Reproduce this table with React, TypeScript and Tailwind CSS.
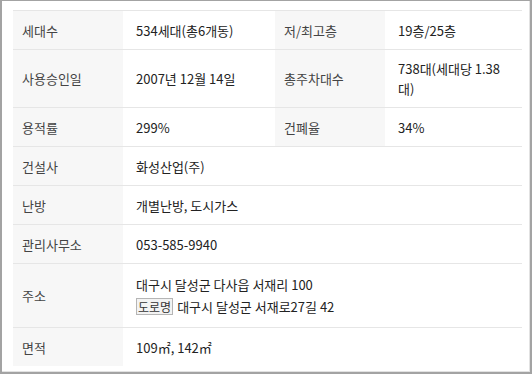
import React from "react"

const font = { fontFamily: '"Noto Sans CJK KR", "Noto Sans", sans-serif' }

type Cell = { label: string; value: React.ReactNode }

const Th = ({ children }: { children: React.ReactNode }) => (
	<div className="flex items-center bg-[#f7f7f7] pl-[9px] text-[13px] text-[#444]">{children}</div>
)

const Td = ({ children, span }: { children: React.ReactNode; span?: boolean }) => (
	<div
		className={
			span
				? "col-span-3 flex items-center pl-[13px] pr-3 text-[13px] text-[#222]"
				: "flex items-center pl-[13px] pr-3 text-[13px] text-[#222]"
		}>
		{children}
	</div>
)

const Row = ({ h, cells }: { h: string; cells: Cell[] }) => (
	<div className={`grid grid-cols-[110px_152px_110px_137px] border-t border-[#e6e6e6] ${h}`}>
		{cells.map((c, i) => (
			<React.Fragment key={i}>
				<Th>{c.label}</Th>
				<Td span={cells.length === 1}>{c.value}</Td>
			</React.Fragment>
		))}
	</div>
)

export default function App() {
	return (
		<div style={font} className="h-[374px] w-[532px] bg-white">
			<div className="h-full w-full border-l-2 border-t border-r-2 border-b-2 border-[#a3a3a3]">
				<div className="h-full w-full border-r border-b border-[#e2e2e2] pl-[11px] pt-[9px]">
					<div className="w-[509px] leading-[19px]">
						<Row
							h="h-[39px]"
							cells={[
								{ label: "세대수", value: "534세대(총6개동)" },
								{ label: "저/최고층", value: "19층/25층" },
							]}
						/>
						<Row
							h="h-[58px]"
							cells={[
								{ label: "사용승인일", value: "2007년 12월 14일" },
								{
									label: "총주차대수",
									value: (
										<span className="leading-[20px]">
											738대(세대당 1.38
											<br />
											대)
										</span>
									),
								},
							]}
						/>
						<Row
							h="h-[39px]"
							cells={[
								{ label: "용적률", value: "299%" },
								{ label: "건폐율", value: "34%" },
							]}
						/>
						<Row h="h-[39px]" cells={[{ label: "건설사", value: "화성산업(주)" }]} />
						<Row h="h-[39px]" cells={[{ label: "난방", value: "개별난방, 도시가스" }]} />
						<Row h="h-[39px]" cells={[{ label: "관리사무소", value: "053-585-9940" }]} />
						<Row
							h="h-[64px]"
							cells={[
								{
									label: "주소",
									value: (
										<div className="flex flex-col gap-[3px]">
											<div>대구시 달성군 다사읍 서재리 100</div>
											<div className="flex items-center">
												<span className="mr-[4px] inline-flex h-[17px] items-center border border-[#b5b5b5] bg-[#f3f3f3] px-[1px] text-[12px] text-[#333]">
													도로명
												</span>
												대구시 달성군 서재로27길 42
											</div>
										</div>
									),
								},
							]}
						/>
						<Row h="h-[39px]" cells={[{ label: "면적", value: "109㎡, 142㎡" }]} />
					</div>
				</div>
			</div>
		</div>
	)
}
